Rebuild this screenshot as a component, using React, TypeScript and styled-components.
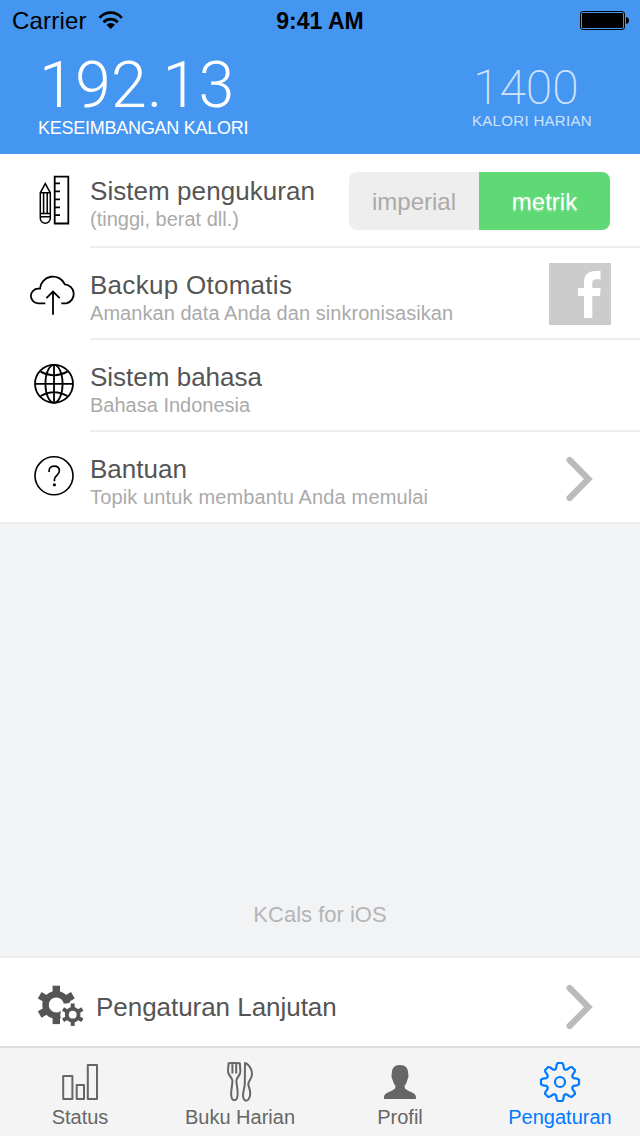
import React from "react";
import styled, { createGlobalStyle } from "styled-components";

const GlobalStyle = createGlobalStyle`
  * { box-sizing: border-box; }
  body {
    margin: 0;
    font-family: "Liberation Sans", Arial, sans-serif;
  }
`;

const Screen = styled.div`
  display: flex;
  flex-direction: column;
  width: 640px;
  height: 1136px;
  background: #f2f3f5;
  white-space: nowrap;
  overflow: hidden;
`;

const Header = styled.header`
  height: 154px;
  background: #4596f1;
`;

const StatusBar = styled.div`
  display: grid;
  grid-template-columns: 1fr auto 1fr;
  height: 40px;
  line-height: 40px;
  padding: 0 11px;
  color: #000;
`;

const Carrier = styled.div`
  display: flex;
  align-items: center;
  gap: 9px;
  padding: 1px 0 0 1px;
  font-size: 24px;
  letter-spacing: 0.2px;
`;

const Clock = styled.div`
  padding-top: 1px;
  font-size: 23px;
  font-weight: 700;
`;

const BatterySlot = styled.div`
  display: flex;
  justify-content: flex-end;
  align-items: center;
  padding-top: 1px;
`;

const Balances = styled.div`
  display: flex;
  justify-content: space-between;
  padding: 0 48px 0 38px;
`;

const Balance = styled.div<{ $small?: boolean }>`
  padding-top: ${(p) => (p.$small ? 24 : 12)}px;
  color: ${(p) => (p.$small ? "#cfe3fb" : "#fff")};
`;

const Amount = styled.div<{ $small?: boolean }>`
  padding-left: 1px;
  font-family: Roboto, "Liberation Sans", sans-serif;
  font-weight: ${(p) => (p.$small ? 200 : 300)};
  font-size: ${(p) => (p.$small ? 48 : 64.5)}px;
  line-height: ${(p) => (p.$small ? 48 : 66)}px;
  letter-spacing: ${(p) => (p.$small ? 0 : 0.2)}px;
`;

const Caption = styled.div<{ $small?: boolean }>`
  font-size: ${(p) => (p.$small ? 15 : 18)}px;
  line-height: ${(p) => (p.$small ? 18 : 20)}px;
  letter-spacing: ${(p) => (p.$small ? 0.32 : -0.25)}px;
`;

const Settings = styled.main`
  background: #fff;
  border-bottom: 2px solid #eee;
`;

const Row = styled.div<{ $height?: number }>`
  display: flex;
  height: ${(p) => p.$height ?? 92}px;
  &:last-child > div { border-bottom: 0; }
`;

const RowIcon = styled.svg`
  flex: none;
  width: 90px;
  height: 90px;
  fill: none;
  stroke: #000;
  stroke-width: 1.8;
`;

const RowBody = styled.div`
  display: flex;
  flex: 1;
  justify-content: space-between;
  border-bottom: 2px solid #eee;
`;

const RowText = styled.div`
  padding-top: 22px;
`;

const Title = styled.div<{ $tracking?: number }>`
  font-size: 26px;
  line-height: 30px;
  letter-spacing: ${(p) => p.$tracking ?? 0}px;
  color: #555;
`;

const Subtitle = styled.div<{ $tracking?: number }>`
  margin-top: 1px;
  font-size: 20px;
  line-height: 24px;
  letter-spacing: ${(p) => p.$tracking ?? 0}px;
  color: #aaa;
`;

const Segments = styled.div`
  display: flex;
  width: 261px;
  height: 58px;
  margin: 18px 30px 0 0;
  border-radius: 8px;
  overflow: hidden;
`;

const Segment = styled.button<{ $on?: boolean }>`
  flex: ${(p) => (p.$on ? "1" : "0 0 130px")};
  border: 0;
  padding: 2px 0 0;
  font: 24px "Liberation Sans", Arial, sans-serif;
  color: ${(p) => (p.$on ? "#fff" : "#aaa")};
  background: ${(p) => (p.$on ? "#5ed975" : "#eee")};
  text-shadow: ${(p) => (p.$on ? "0 2px 1px rgba(255,255,255,.3)" : "none")};
`;

const FacebookMark = styled.svg`
  width: 62px;
  height: 62px;
  margin: 15px 29px 0 0;
`;

const ChevronMark = styled.svg<{ $top: number }>`
  width: 32px;
  height: 48px;
  margin: ${(p) => p.$top}px 44px 0 0;
  fill: none;
  stroke: #bbb;
  stroke-width: 6.2;
  stroke-linecap: round;
`;

const Blank = styled.div`
  display: flex;
  flex: 1;
  flex-direction: column;
  justify-content: flex-end;
  align-items: center;
  padding-bottom: 28px;
  font-size: 22px;
  line-height: 26px;
  color: #b4b5b6;
`;

const Advanced = styled.div`
  display: flex;
  justify-content: space-between;
  height: 90px;
  background: #fff;
  border-top: 2px solid #eee;
`;

const AdvancedLink = styled.div`
  display: flex;
`;

const AdvancedTitle = styled(Title)`
  padding: 34px 0 0 6px;
`;

const TabBar = styled.nav`
  display: grid;
  grid-template-columns: repeat(4, 1fr);
  height: 90px;
  background: #f4f4f4;
  border-top: 2px solid #ddd;
`;

const Tab = styled.div<{ $active?: boolean }>`
  display: flex;
  flex-direction: column;
  align-items: center;
  padding-top: 8px;
  gap: 1px;
  font-size: 20px;
  line-height: 24px;
  color: ${(p) => (p.$active ? "#007aff" : "#666")};
`;

const TabIcon = styled.svg`
  width: 48px;
  height: 48px;
  fill: none;
  stroke: currentColor;
  stroke-width: 2;
  stroke-linejoin: round;
`;

const Chevron = ({ top }: { top: number }) => (
  <ChevronMark $top={top} viewBox="0 0 32 48">
    <path d="M5.6 5L24.4 24 5.6 43" />
  </ChevronMark>
);

/* A filled six-toothed cog with a round hole. */
const Cog = ({ x, y, outer, body, hole, tooth }: Record<"x" | "y" | "outer" | "body" | "hole" | "tooth", number>) => (
  <g transform={`translate(${x} ${y})`} stroke="none" fill="#555">
    {[0, 60, 120, 180, 240, 300].map((a) => (
      <rect key={a} x={-tooth / 2} y={-outer} width={tooth} height={outer - hole - 1} transform={`rotate(${a})`} />
    ))}
    <circle r={(body + hole) / 2} fill="none" stroke="#555" strokeWidth={body - hole} />
  </g>
);

/* One tooth of the outlined gear spans 45 degrees; rotate it eight times. */
const gearPath = (() => {
  const tooth = [
    [-4.9, -12.5],
    [-3.9, -13.6],
    [-3.3, -17.2],
    [-2.3, -19],
    [2.3, -19],
    [3.3, -17.2],
    [3.9, -13.6],
    [4.9, -12.5],
  ];
  const points: string[] = [];
  for (let i = 0; i < 8; i++) {
    const a = (i * Math.PI) / 4;
    for (const [x, y] of tooth) {
      points.push(
        `${(24 + x * Math.cos(a) - y * Math.sin(a)).toFixed(2)} ${(26 + x * Math.sin(a) + y * Math.cos(a)).toFixed(2)}`
      );
    }
  }
  return `M${points.join("L")}Z`;
})();

export default function App() {
  return (
    <Screen>
      <GlobalStyle />
      <Header>
        <StatusBar>
          <Carrier>
            Carrier
            <svg width="28" height="24" viewBox="0 0 28 24" fill="none" stroke="#000" strokeWidth="2.8">
              <path d="M3.6 8.8A14.4 14.4 0 0 1 25.7 8.8M7.5 13.2A10 10 0 0 1 21.8 13.2" />
              <path d="M14.7 20L10.4 15.7A6.5 6.5 0 0 1 19 15.7Z" fill="#000" stroke="none" />
            </svg>
          </Carrier>
          <Clock>9:41 AM</Clock>
          <BatterySlot>
            <svg width="49" height="20" viewBox="0 0 49 20">
              <rect x="0.5" y="0.5" width="44" height="18" rx="2.5" fill="none" stroke="#000" />
              <rect x="2" y="2" width="41" height="15" rx="1" />
              <path d="M46 6Q49 6.5 49 9.5T46 13Z" />
            </svg>
          </BatterySlot>
        </StatusBar>
        <Balances>
          <Balance>
            <Amount>192.13</Amount>
            <Caption>KESEIMBANGAN KALORI</Caption>
          </Balance>
          <Balance $small>
            <Amount $small>1400</Amount>
            <Caption $small>KALORI HARIAN</Caption>
          </Balance>
        </Balances>
      </Header>

      <Settings>
        <Row $height={94}>
          <RowIcon viewBox="0 0 90 90">
            <path d="M45.3 29.6L50.3 38.8V64.3A5 5 0 0 1 40.3 64.3V38.8ZM40.3 38.8H50.3M43.6 38.8V59.4M47.2 38.8V59.4M40.3 59.4H50.3M40.3 62.7H50.3" strokeWidth="1.5" />
            <path d="M54.7 22.6H68.3V69.5H54.7ZM54.7 29.3H60M54.7 37.4H60M54.7 45.4H60M54.7 53.3H60M54.7 61.2H60" />
          </RowIcon>
          <RowBody>
            <RowText>
              <Title $tracking={0.06}>Sistem pengukuran</Title>
              <Subtitle>(tinggi, berat dll.)</Subtitle>
            </RowText>
            <Segments>
              <Segment>imperial</Segment>
              <Segment $on>metrik</Segment>
            </Segments>
          </RowBody>
        </Row>
        <Row>
          <RowIcon viewBox="0 0 90 90">
            <path d="M45.3 55.3H38.2A7.3 7.3 0 0 1 38.2 40.7H40A13 13 0 0 1 64.9 36.4A9.6 9.6 0 0 1 66.4 55.3H61.3M53 66.7V43.5M46.4 50.2L53 43.6 59.7 50.2" />
          </RowIcon>
          <RowBody>
            <RowText>
              <Title $tracking={0.28}>Backup Otomatis</Title>
              <Subtitle $tracking={0.05}>Amankan data Anda dan sinkronisasikan</Subtitle>
            </RowText>
            <FacebookMark viewBox="0 0 62 62">
              <rect width="62" height="62" fill="#ccc" />
              <path d="M35 55V33H29V25H35V19.5C35 11.5 39.5 8 46.5 8H51.6V16.3H47.2C44.4 16.3 43.3 17.5 43.3 20V25H51.7L51 33H43.3V55Z" fill="#fff" stroke="none" />
            </FacebookMark>
          </RowBody>
        </Row>
        <Row>
          <RowIcon viewBox="0 0 90 90">
            <circle cx="54" cy="43.8" r="19" />
            <ellipse cx="54" cy="43.8" rx="8.6" ry="19" />
            <path d="M54 24.8V62.8M35 43.8H73M40.6 31.6Q54 39 67.4 31.6M40.6 56Q54 48.3 67.4 56" />
          </RowIcon>
          <RowBody>
            <RowText>
              <Title>Sistem bahasa</Title>
              <Subtitle>Bahasa Indonesia</Subtitle>
            </RowText>
          </RowBody>
        </Row>
        <Row $height={90}>
          <RowIcon viewBox="0 0 90 90">
            <circle cx="54" cy="43.8" r="19" strokeWidth="1.6" />
            <path d="M49 40C48.7 36.3 50.6 34.2 54.1 34.2C57.4 34.2 59.4 36.2 59.4 39C59.4 43 54.4 43.6 54.4 47.4V49.2" strokeWidth="1.7" />
            <circle cx="54.4" cy="52.8" r="1.6" fill="#000" stroke="none" />
          </RowIcon>
          <RowBody>
            <RowText>
              <Title>Bantuan</Title>
              <Subtitle $tracking={0.14}>Topik untuk membantu Anda memulai</Subtitle>
            </RowText>
            <Chevron top={23} />
          </RowBody>
        </Row>
      </Settings>

      <Blank>KCals for iOS</Blank>

      <Advanced>
        <AdvancedLink>
          <RowIcon viewBox="0 0 90 90">
            <Cog x={56.3} y={46.9} outer={19.2} body={14} hole={7.5} tooth={7.4} />
            <circle cx="72.7" cy="56.7" r="12.4" fill="#fff" stroke="none" />
            <path d="M61 45.5H74V57H61Z" fill="#fff" stroke="none" />
            <Cog x={72.7} y={56.7} outer={11.2} body={7.8} hole={3.9} tooth={4} />
          </RowIcon>
          <AdvancedTitle $tracking={-0.04}>Pengaturan Lanjutan</AdvancedTitle>
        </AdvancedLink>
        <Chevron top={25} />
      </Advanced>

      <TabBar>
        <Tab>
          <TabIcon viewBox="0 0 48 48">
            <path d="M7.2 20H16.4V43H7.2ZM20.7 29H28V43H20.7ZM31.8 9H41V43H31.8Z" />
          </TabIcon>
          Status
        </Tab>
        <Tab>
          <TabIcon viewBox="0 0 48 48">
            <path d="M12.6 7.2Q18 6.6 23.8 7.2L24.4 15C24.8 20 20.4 21 20.4 24.5C20.4 29 22.2 34 21.6 39C21 46 15.8 46 15.2 39C14.8 34 16.6 29 16.4 24.5C16.2 21 11.8 20 12 15ZM16.4 7.5V17.5M20.2 7.5V17.5" />
            <path d="M29 7C32 7.5 36 12.5 36 18C36 23 32.3 25 32.3 28C32.3 31 34.8 34 34.2 38C33.4 46.5 27.5 46.5 27 40C26.8 36 28.8 31 28.8 28Z" />
          </TabIcon>
          Buku Harian
        </Tab>
        <Tab>
          <TabIcon viewBox="0 0 48 48">
            <path
              fill="currentColor"
              stroke="none"
              d="M24 9C29.5 9 32.3 12 32.2 18C33 19 32 23 31.3 24C30.8 27 29.5 28.5 28.7 29.5V32C31 36 40 35.5 40 41.5V43H8V41.5C8 35.5 17 36 19.3 32V29.5C18.5 28.5 17.2 27 16.7 24C16 23 15 19 15.8 18C15.7 12 18.5 9 24 9Z"
            />
          </TabIcon>
          Profil
        </Tab>
        <Tab $active>
          <TabIcon viewBox="0 0 48 48">
            <path d={gearPath} strokeWidth="2.2" />
            <circle cx="24" cy="26" r="5" strokeWidth="2.2" />
          </TabIcon>
          Pengaturan
        </Tab>
      </TabBar>
    </Screen>
  );
}
